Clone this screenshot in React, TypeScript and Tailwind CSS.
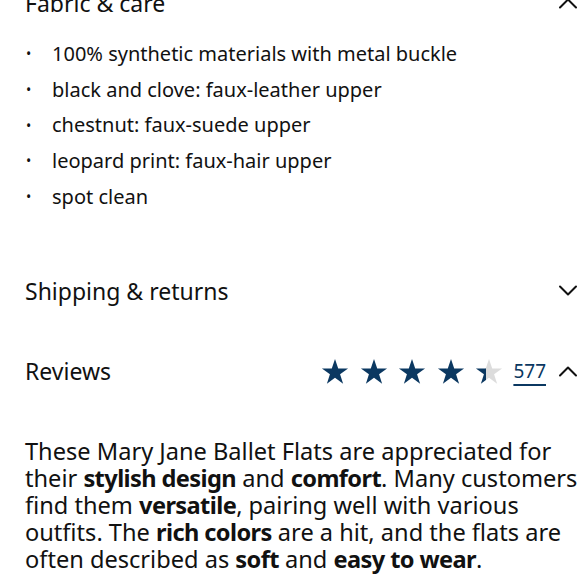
import React from "react";

const bullets = [
    "100% synthetic materials with metal buckle",
    "black and clove: faux-leather upper",
    "chestnut: faux-suede upper",
    "leopard print: faux-hair upper",
    "spot clean",
];

function Chevron({ up }: { up?: boolean }) {
    return (
        <svg width="20" height="12" viewBox="0 0 20 12" fill="none">
            <path
                d={up ? "M2 10.5 10 2.5l8 8" : "M2 1.5l8 8 8-8"}
                stroke="#111"
                strokeWidth="2"
                strokeLinecap="round"
                strokeLinejoin="round"
            />
        </svg>
    );
}

function Star({ fill, id }: { fill: number; id: string }) {
    return (
        <svg width="28" height="27" viewBox="0 0 24 23">
            <defs>
                <linearGradient id={id} x1="0" x2="1" y1="0" y2="0">
                    <stop offset={`${fill * 100}%`} stopColor="#0b3861" />
                    <stop offset={`${fill * 100}%`} stopColor="#dcdcdc" />
                </linearGradient>
            </defs>
            <path
                d="M12 0.8l2.75 8.05h8.45l-6.85 4.95 2.6 8.1L12 16.9l-6.95 5 2.6-8.1L0.8 8.85h8.45z"
                fill={`url(#${id})`}
            />
        </svg>
    );
}

function B({ children }: { children: React.ReactNode }) {
    return <b className="tracking-[-0.6px]">{children}</b>;
}

export default function App() {
    const rating = 4.4;

    return (
        <main
            className="w-[580px] h-[580px] overflow-hidden bg-white text-[#111]"
            style={{ fontFamily: "'Noto Sans', 'Open Sans', sans-serif" }}
        >
            <div className="pl-[25px] pr-[2px]">
                {/* Fabric & care */}
                <div className="-mt-[17px] flex h-[40px] items-center justify-between">
                    <h2 className="text-[23px]">Fabric &amp; care</h2>
                    <Chevron up />
                </div>

                <ul className="mt-[13px]">
                    {bullets.map((b) => (
                        <li key={b} className="flex h-[35.7px] items-center text-[20px]">
                            <span className="w-[27px] pl-[1px] text-[14px]">•</span>
                            <span>{b}</span>
                        </li>
                    ))}
                </ul>

                {/* Shipping & returns */}
                <div className="mt-[57px] flex h-[40px] items-center justify-between">
                    <h2 className="text-[23px]">Shipping &amp; returns</h2>
                    <Chevron />
                </div>

                {/* Reviews */}
                <div className="mt-[40px] flex h-[40px] items-center justify-between">
                    <h2 className="text-[23px]">Reviews</h2>
                    <div className="flex items-center">
                        <div className="flex gap-[10.6px]">
                            {[0, 1, 2, 3, 4].map((i) => (
                                <Star
                                    key={i}
                                    id={`star-${i}`}
                                    fill={Math.max(0, Math.min(1, rating - i))}
                                />
                            ))}
                        </div>
                        <a
                            href="#"
                            className="ml-[10px] text-[19px] text-[#0b3861] underline decoration-[2px] underline-offset-[6px]"
                        >
                            577
                        </a>
                        <span className="ml-[12px]">
                            <Chevron up />
                        </span>
                    </div>
                </div>

                {/* Review summary */}
                <p className="mt-[47px] whitespace-nowrap text-[23.6px] leading-[27px]">
                    These Mary Jane Ballet Flats are appreciated for
                    <br />
                    their <B>stylish design</B> and <B>comfort</B>. Many customers
                    <br />
                    find them <B>versatile</B>, pairing well with various
                    <br />
                    outfits. The <B>rich colors</B> are a hit, and the flats are
                    <br />
                    often described as <B>soft</B> and <B>easy to wear</B>.
                </p>
            </div>
        </main>
    );
}
